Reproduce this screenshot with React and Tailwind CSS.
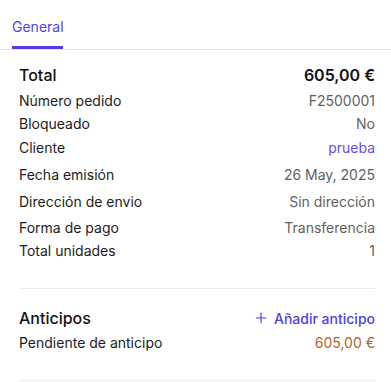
import { Plus } from "lucide-react";

const rows = [
  { label: "Número pedido", value: "F2500001", mt: "mt-[3px]" },
  { label: "Bloqueado", value: "No", mt: "mt-[3px]" },
  { label: "Cliente", value: "prueba", mt: "mt-[4px]", link: true },
  { label: "Fecha emisión", value: "26 May, 2025", mt: "mt-[7px]" },
  { label: "Dirección de envio", value: "Sin dirección", mt: "mt-[7px]" },
  { label: "Forma de pago", value: "Transferencia", mt: "mt-[6px]" },
  { label: "Total unidades", value: "1", mt: "mt-[3px]" },
];

export default function App() {
  return (
    <div
      className="w-[391px] h-[382px] bg-white overflow-hidden"
      style={{ fontFamily: "Inter, 'Noto Sans', sans-serif" }}
    >
      <div className="h-[50px] border-b border-[#e5e5e5] flex items-end pl-[12px]">
        <button className="h-full flex flex-col justify-end">
          <span className="text-[14px] leading-[20px] text-[#5046e5] pb-[9px]">General</span>
          <span className="h-[3px] bg-[#4f3fe0] w-[51px]" />
        </button>
      </div>
      <div className="pl-[19px] pr-[16px] pt-[13px]">
        <div className="flex justify-between items-center h-[24px]">
          <span className="text-[16px] font-medium text-[#111]">Total</span>
          <span className="text-[16px] font-semibold text-[#111]">605,00 €</span>
        </div>
        {rows.map((r) => (
          <div
            key={r.label}
            className={`flex justify-between items-center h-[20px] text-[14px] ${r.mt}`}
          >
            <span className="text-[#1c1c1c]">{r.label}</span>
            <span className={r.link ? "text-[#6a48e8]" : "text-[#5f5f5f]"}>{r.value}</span>
          </div>
        ))}
        <div className="mt-[28px] h-px bg-[#ececec]" />
        <div className="mt-[19px] flex justify-between items-center h-[20px]">
          <span className="text-[16px] font-medium text-[#111]">Anticipos</span>
          <button className="flex items-center gap-[5px] text-[14px] font-medium text-[#4f3fe0]">
            <Plus size={16} strokeWidth={1.75} />
            Añadir anticipo
          </button>
        </div>
        <div className="mt-[4px] flex justify-between items-center h-[20px] text-[14px]">
          <span className="text-[#1c1c1c]">Pendiente de anticipo</span>
          <span className="text-[#b0642c]">605,00 €</span>
        </div>
        <div className="mt-[28px] h-px bg-[#ececec]" />
      </div>
    </div>
  );
}
